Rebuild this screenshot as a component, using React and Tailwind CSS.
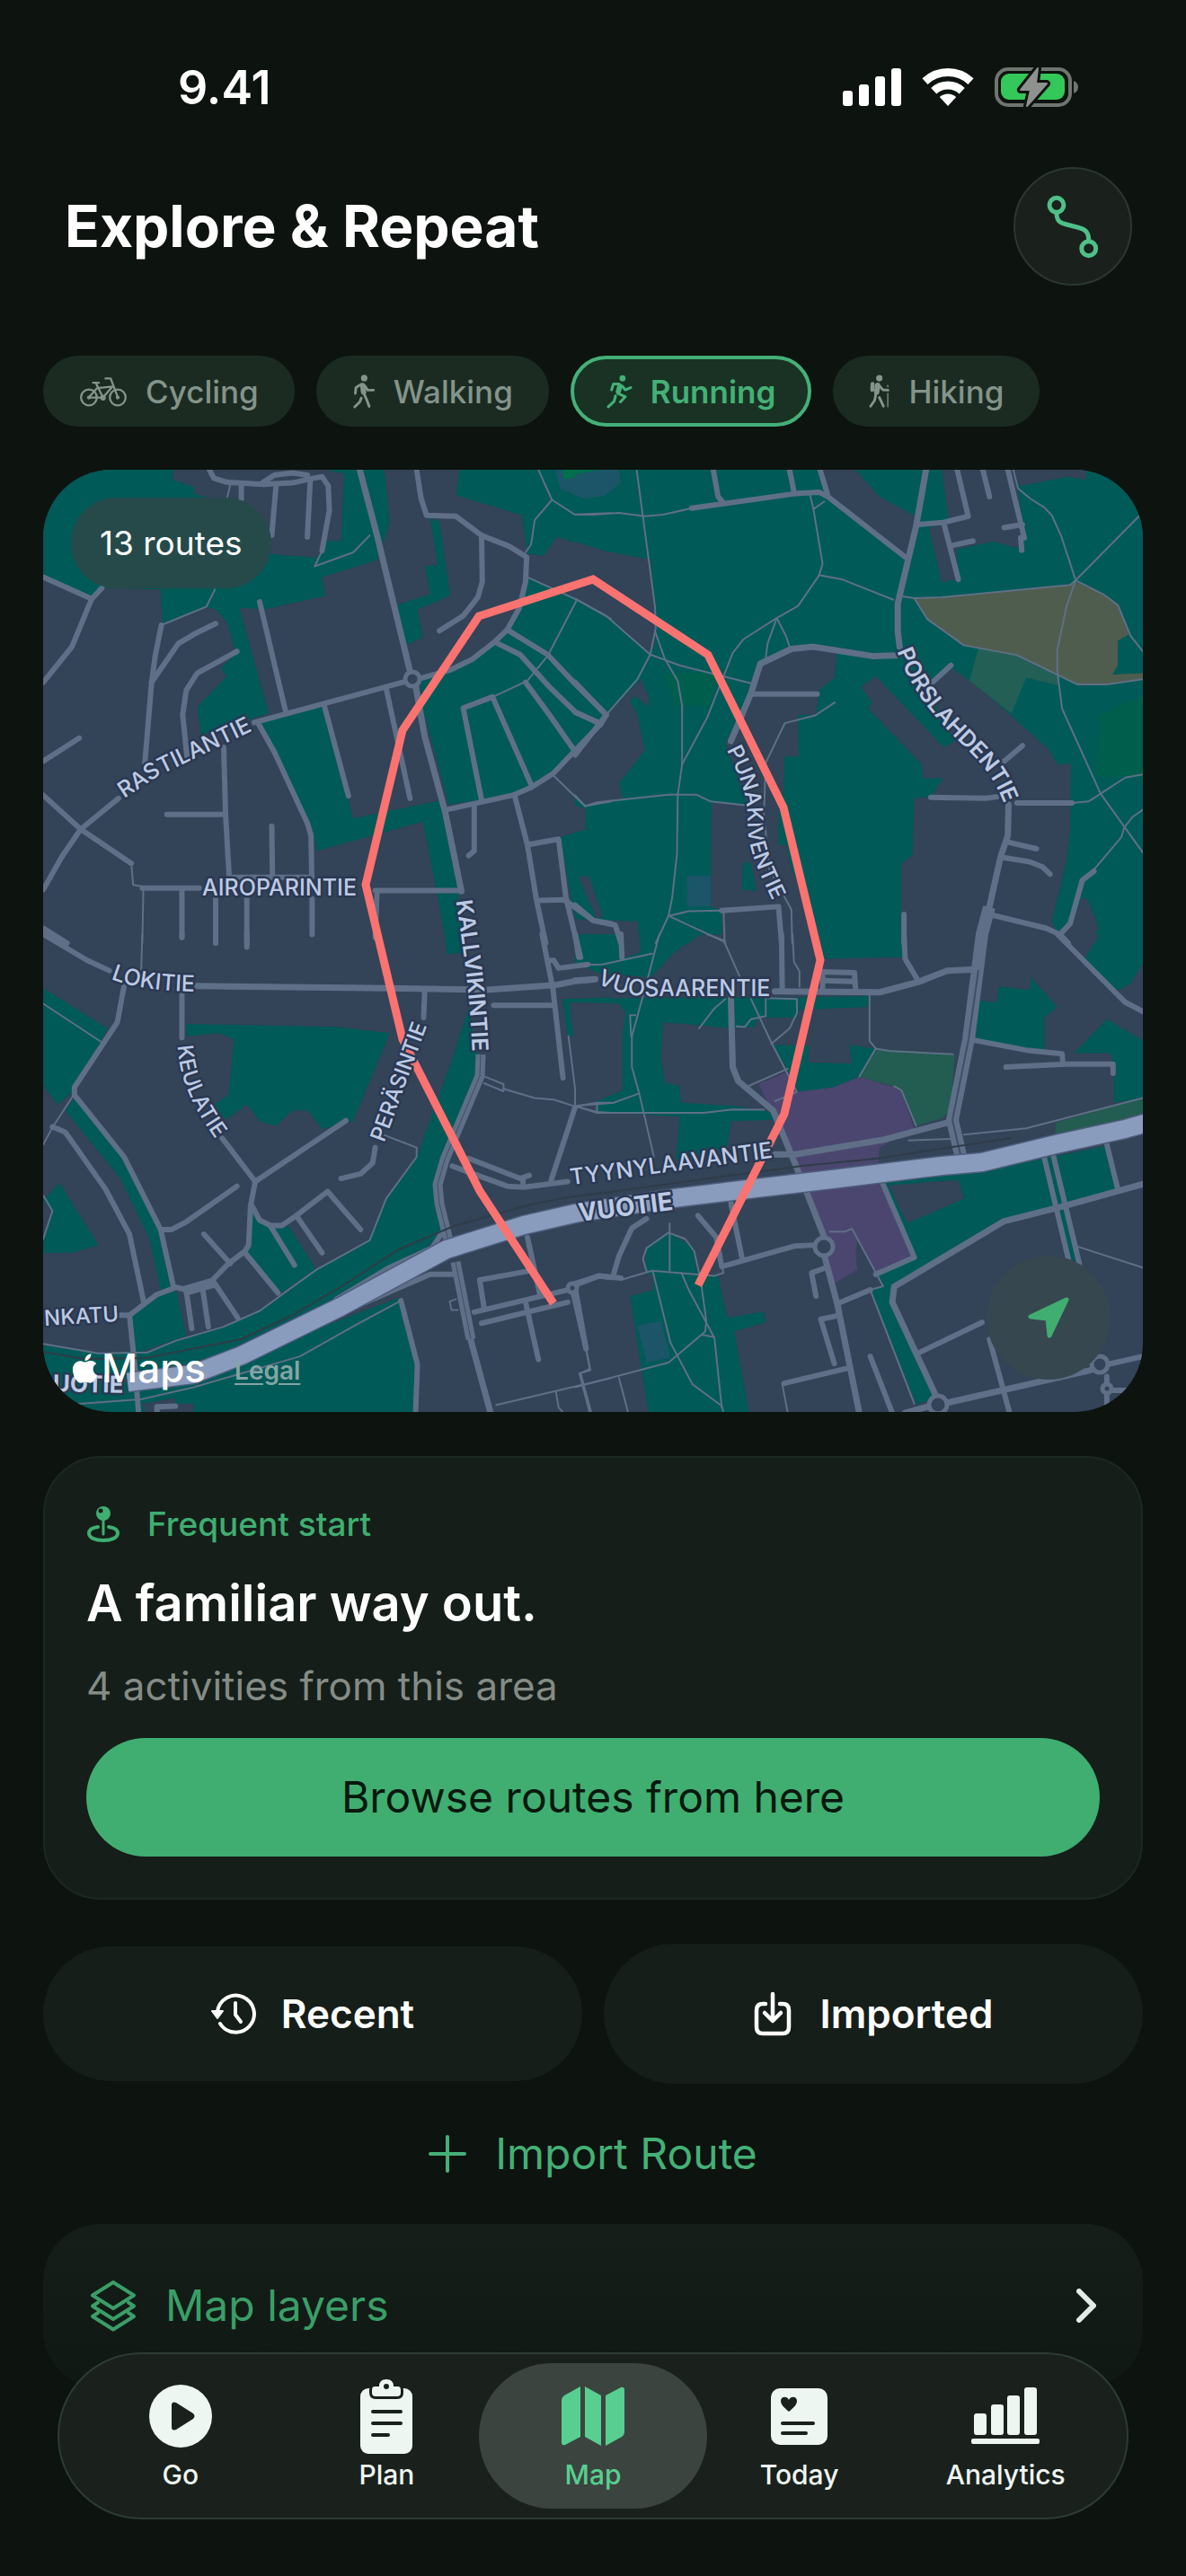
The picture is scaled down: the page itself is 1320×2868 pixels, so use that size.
import React, { useState } from 'react';
import { FaApple } from 'react-icons/fa';

// Map artwork is split in four tiles, each with its own survey grid
const TILES = [
    {
        id: 'nw',
        transform: 'translate(40 510) scale(0.4082 0.3444)',
        land: [
            ['#005a57', '20,38 375,38 372,70 430,92 432,115 500,140 640,310 765,322 795,268 832,268 840,50 790,38 950,38 965,210 930,330 780,385 790,445 630,488 555,485 635,825 450,895 440,805 520,705 505,680 545,630 520,530 490,490 462,482 345,535 340,425 190,420 152,455 20,385'],
            ['#005a57', '1075,195 1100,205 1130,445 1040,490 1055,580 1010,605 985,475 1075,440 1060,350 1095,345'],
            ['#005a57', '1155,38 1570,38 1570,310 1420,255 1385,315 1340,310 1325,185 1145,120'],
            ['#005a57', '1340,385 1480,455 1570,520 1570,820 1540,860 1470,945 1410,1025 1300,1090 1125,1120 1060,830 1045,715 1130,690 1250,595 1285,555 1318,490'],
            ['#005a57', '605,855 785,795 850,1095 865,1165 1110,1105 1150,1390 1165,1545 1115,1545 1090,1390 1055,1175 765,1270 755,1200 655,950'],
            ['#005a57', '1570,1120 1500,1130 1500,1200 1430,1225 1460,1430 1485,1545 1570,1545'],
            ['#334358', '1480,1355 1510,1350 1550,1490 1520,1495'],
            ['#1b5567', '1415,38 1430,100 1505,135 1570,115 1570,38'],
            ['#00704c', '1435,38 1440,68 1570,45 1570,38'],
        ],
        roads: [
            '473,38 485,65 520,78 620,85 700,80 745,68 780,60 797,90 800,170 780,300',
            '620,78 650,55 700,48 740,55',
            '560,85 560,135', '655,85 643,250', '748,70 740,255',
            '1038,38 1050,130 1065,185 1145,188 1215,250 1290,285 1338,320 1335,400 1318,485 1285,555 1250,595 1190,650 1130,685 1050,712',
            '1215,250 1217,400 1205,450 1165,510 1100,558',
            '1285,555 1395,635 1470,730 1555,830',
            '1255,597 1320,635 1400,740 1470,820 1540,860',
            '1335,725 1400,830 1468,945',
            '1215,1105 1165,808 1245,772 1350,1055',
            '1125,1135 1300,1090 1350,1065 1410,1020 1470,945 1540,860 1555,830',
            '1195,1120 1195,1270 1180,1285',
            '1305,1090 1340,1250 1365,1430 1390,1568',
            '1340,1250 1425,1232 1445,1420 1475,1568',
            '1370,1430 1440,1428 1520,1495 1568,1505',
            '595,855 1000,725', '610,465 680,815', '785,795 852,1092', '955,745 1020,1100',
            '605,855 650,950 740,1180 750,1220 752,1350',
            '20,385 152,455 180,420', '152,455 98,610 20,725',
            '490,535 430,570 388,600 315,725',
            '342,540 325,640 315,730 297,985',
            '548,625 440,695 410,750 400,830 412,965',
            '118,905 20,980', '20,1090 122,1200 260,1310', '225,1100 122,1200 70,1290 20,1395',
            '357,1152 515,1152', '512,935 517,1152 527,1355', '643,1190 645,1355', '527,1355 752,1355',
            '290,1390 445,1390', '398,1395 398,1550', '490,1425 490,1568', '575,1425 575,1568',
            '753,1425 753,1540', '925,1398 1155,1398', '930,1400 925,1550', '20,1520 85,1568',
        ],
        mains: ['883,38 930,250 1020,690', '1035,735 1060,900 1115,1140 1160,1400'],
        trails: [
            '530,85 522,125', '910,250 865,305 760,350 780,300', '488,425 465,480 342,540',
            '1370,38 1407,135 1360,200 1350,280 1335,305', '1407,135 1468,182 1568,178',
            '1340,385 1475,458 1568,520', '1475,458 1395,640 1340,720 1250,770',
            '1410,1025 1497,1125 1568,1110', '260,1310 265,1380 293,1385 290,1568',
        ],
    },
    {
        id: 'ne',
        transform: 'translate(640 510) scale(0.4082 0.3444)',
        land: [
            ['#005a57', '0,38 1560,38 1560,1540 0,1540'],
            ['#1b5567', '0,38 120,38 125,80 80,122 30,132 0,122'],
            ['#00704c', '0,38 70,38 0,52'],
            ['#334358', '0,270 80,300 190,325 205,325 218,480 218,600 205,635 100,520 0,455'],
            ['#334358', '180,715 200,770 200,805 165,770 148,785 170,830 190,945 120,1050 130,1100 30,1120 0,1085 0,960 85,830'],
            ['#334358', '0,1125 28,1130 30,1200 0,1210'],
            ['#334358', '665,38 765,38 830,125 930,190 900,320 690,120'],
            ['#334358', '1000,38 1200,38 1225,250 1205,290 1140,270 1040,295 1045,390 1000,402 965,225 1020,210'],
            ['#334358', '1190,38 1395,38 1392,70 1340,60 1215,90'],
            ['#334358', '505,665 590,615 650,612 712,630 708,710 665,750 658,830 608,830 610,965 570,965 570,1060 555,1150 555,1250 575,1250 590,1330 650,1470 665,1545 400,1545 400,1463 370,1450 372,1115 470,1120 410,920 480,765'],
            ['#005a57', '458,1305 480,1310 495,1400 455,1395'],
            ['#334358', '960,740 1030,680 1120,760 1290,940 1315,990 1352,988 1350,1200 1340,1300 1300,1500 1320,1545 890,1545 890,1310 920,1285 925,1100 970,1095 1005,1035 950,1035 945,990 800,810 810,790 780,740 820,705 1005,935 1035,915'],
            ['#334358', '1380,1420 1400,1430 1428,1520 1415,1545 1320,1545 1360,1500'],
            ['#334358', '0,1490 60,1492 170,1498 175,1545 0,1545'],
            ['#334358', '10,1355 38,1350 75,1480 60,1492'],
            ['#235f55', '1100,615 1210,640 1320,705 1320,735 1230,710 1190,825 1075,720'],
            ['#4f5d4e', '925,455 1000,450 1350,410 1365,400 1440,440 1480,475 1510,570 1480,590 1480,670 1465,700 1550,695 1550,715 1450,732 1370,732 1320,705 1210,640 1060,605 960,520'],
            ['#005f4c', '1430,830 1550,770 1550,1030 1420,1030'],
            ['#005f4c', '240,700 390,690 370,800 280,800'],
            ['#1b5567', '305,1350 370,1350 370,1450 305,1450'],
        ],
        roads: [
            '377,38 390,125 405,145', '318,162 600,115 665,110 690,125 900,320', '585,38 598,115', '668,38 688,115',
            '935,215 1005,208 1072,188 1042,38', '1112,38 1130,125', '1180,38 1225,258 1215,258 1218,298',
            '1170,225 1220,215', '1005,208 1045,392', '1030,282 1085,268',
            '480,763 660,763', '1025,670 965,735', '1220,930 1165,985', '970,1097 1120,1100 1150,1095', '1205,1115 1355,1115',
            '1175,1240 1258,1263', '1160,1290 1240,1305 1275,1322 1295,1345',
            '1415,1335 1383,1365 1350,1505 1322,1540', '1130,1475 1285,1520 1322,1540 1345,1568',
            '897,1475 897,1568', '400,1463 555,1450 563,1568', '0,1445 50,1495 110,1510 125,1568',
            '0,725 85,830', '0,822 70,858', '85,830 0,960',
        ],
        mains: [
            '957,38 930,220 880,470 880,560 885,610',
            '875,638 810,640 650,610 590,617 505,665 480,760 425,915',
            '1182,1120 1180,1220 1160,1290 1130,1450 1110,1540',
        ],
        trails: [
            '0,183 50,183 120,177 190,188 240,183 318,162', '168,38 218,480 220,550 205,635 170,715 85,830',
            '0,455 85,510 205,635 285,670 480,728',
            '218,560 245,650 280,720 292,800 292,990 280,1090 278,1280 265,1420 255,1480 220,1568',
            '292,990 360,840 405,705 430,630 460,585 550,517 608,478 665,380 675,342 650,165 640,115', '650,165 680,140',
            '665,378 730,393 868,458', '550,517 525,600 520,645', '550,517 575,575 585,610',
            '708,790 655,832 572,857 520,985 515,1150 530,1330 590,1460 592,1568',
            '0,1090 28,1125 60,1113 255,1088 330,1088 370,1110 470,1123',
            '255,1480 310,1465 400,1463', '255,1480 410,1565', '405,1465 408,1568',
            '1195,38 1208,98 1240,130 1280,160 1300,185 1325,250 1365,395 1540,185',
            '895,447 925,453 1000,450 1350,410 1365,395 1440,440 1480,475 1515,575 1548,625',
            '925,453 960,520 1060,605 1205,637 1370,732 1450,732 1548,715',
            '1365,395 1340,480 1315,620 1315,690 1328,810 1433,1085 1548,1275',
            '1355,1115 1400,1110 1433,1085 1500,1033 1548,1023',
            '1415,1330 1490,1225 1497,1195 1520,1160 1548,1137',
        ],
    },
    {
        id: 'sw',
        transform: 'translate(40 1040) scale(0.4082 0.3444)',
        land: [
            ['#005a57', '1115,0 1160,0 1165,60 1120,65'],
            ['#005a57', '410,290 820,300 965,320 865,605 780,630 740,570 700,570 655,620 610,605 575,550 520,600 480,555 525,520 540,340 500,320 410,330'],
            ['#005a57', '1180,240 1205,380 1205,470 1120,730 1085,800 1090,870 1110,960 1060,1020 830,1180 560,1340 380,1400 300,1440 20,1440 20,1330 170,1355 300,1350 380,1315 510,1270 610,1215 760,1090 905,990 955,855 1040,715 1130,420'],
            ['#005a57', '590,900 620,940 690,945 765,1085 660,1165 570,1035'],
            ['#005a57', '385,1160 410,1300 270,1355 260,1235 370,1145'],
            ['#005a57', '20,175 195,305 105,505 60,550 20,490'],
            ['#005a57', '105,530 240,720 340,955 375,1140 340,1150 310,985 230,790 80,570'],
            ['#005a57', '65,805 170,1005 100,1030 20,1030 20,980 45,900 20,860'],
            ['#005a57', '20,1440 20,1550 1035,1550 1040,1390 990,1175 800,1260 430,1430 270,1450'],
            ['#334358', '290,1518 380,1500 380,1518 430,1518 430,1550 300,1550'],
            ['#005a57', '1435,210 1568,205 1568,220 1455,222 1465,330 1450,330'],
            ['#005a57', '1485,0 1568,0 1568,130 1510,98'],
        ],
        roads: [
            '20,0 140,85 200,118',
            '240,170 222,285 105,495 105,520 240,720 340,955 375,1140 400,1147 480,1120 525,1065 570,1025 580,1005 585,880 598,800',
            '398,195 398,335', '508,660 598,800 845,603', '1060,185 1057,270', '925,690 918,740 885,775 832,790',
            '45,623 80,640 190,825 255,970 295,1195', '215,1232 255,1232 330,1165 375,1145', '255,1232 270,1400 280,1550',
            '548,815 410,930 370,955 345,955', '458,970 530,1065',
            '590,880 610,925 640,942 670,942 710,910 795,832 885,955', '710,910 780,1030', '640,945 705,1070',
            '570,1030 660,1160', '485,1125 550,1240', '410,1155 425,1275', '455,1150 470,1270', '410,1160 485,1135',
            '1135,750 1285,815 1330,818 1450,800', '1180,725 1320,790 1345,780 M1328,790 1328,815', '1248,230 1410,230', '1380,0 1410,180 1437,465',
            '1470,560 1405,795', '1405,85 1412,85 1425,110 1505,98', '1340,980 1375,1170', '1450,1190 1215,1258',
            '1195,1222 1450,1150', '1222,1210 1210,1118 1340,1090', '1335,1190 1370,1375', '1465,1160 1500,1340',
            '1480,1130 1535,1105 1568,1110', '1470,0 1485,75', '995,1185 1040,1390 1035,1550',
            '330,1550 330,1528 380,1526', '820,1180 960,1080 1080,1015 1110,960', '850,1215 1075,1100 1140,1100',
            '398,0 398,10', '490,0 490,28', '575,0 575,42',
        ],
        mains: ['440,168 960,175 1230,180 1415,165 1470,152 1520,147', '1185,1310 1240,1550'],
        trails: [
            '290,0 287,115', '20,225 180,350', '100,525 45,625 20,680', '20,845 45,895 20,985',
            '950,650 1038,690 1038,720 955,855 910,990 765,1085 700,1140 610,1218 510,1270 380,1315 305,1352 170,1355 20,1325',
            '1222,460 1275,485 1275,508 1222,482', '1275,500 1360,530 1412,535 1470,557 1530,575 1568,578', '1470,557 1530,545 1568,545',
            '1452,330 1470,500 1470,557', '995,1185 870,1265 720,1365 430,1465 290,1503 100,1520', '1255,1522 1568,1435',
            '1500,1340 1510,1405 1485,1420 1515,1550', '1145,1180 1128,1188 1133,1215 1150,1215', '1418,1480 1425,1530 1440,1550',
        ],
    },
    {
        id: 'se',
        transform: 'translate(640 1040) scale(0.4082 0.3444)',
        land: [
            ['#005a57', '0,0 345,0 270,60 205,140 60,125 20,100 0,95'],
            ['#334358', '130,0 175,0 178,60 130,78'],
            ['#005a57', '0,210 300,205 600,205 800,200 800,235 610,245 600,285 600,270 500,270 490,300 425,305 300,290 240,285 235,400 245,480 285,490 290,545 440,555 530,575 545,600 425,605 415,690 275,730 285,590 60,575 60,540 130,505 130,320 138,255 120,225 0,220'],
            ['#005a57', '680,80 665,0 890,0 895,75'],
            ['#005a57', '540,358 640,360 635,415 755,418 748,358 820,370 775,460 710,495 610,510 580,440'],
            ['#235c50', '825,370 1035,388 1025,570 1000,595 930,620 885,500 870,492 775,462'],
            ['#4b466f', '500,485 580,445 605,510 705,495 775,462 870,495 890,510 925,630 830,690 825,790 835,790 925,1045 820,1100 770,990 765,1030 770,1085 705,1130 680,960 620,790 545,590'],
            ['#005a57', '1095,215 1150,220 1155,170 1240,180 1243,140 1315,235 1280,270 1280,375 1220,370 1095,340'],
            ['#005a57', '1430,0 1568,0 1550,90 1515,160 1475,185 1390,80'],
            ['#005a57', '1360,385 1450,275 1550,345 1550,530 1470,545 1470,440 1460,385'],
            ['#235c50', '1310,610 1550,528 1550,600 1310,655'],
            ['#005a57', '835,795 1110,765 1280,725 1445,685 1480,825 1330,880 1170,925 870,1145 865,1190 990,1500 930,1520 805,1150 840,1140 820,1100 930,1045'],
            ['#334358', '855,812 1045,795 1060,855 905,935'],
            ['#005a57', '1320,890 1335,890 1370,1065 1350,1045'],
            ['#005a57', '190,1100 195,1010 255,965 320,1010 335,1100'],
            ['#005a57', '210,1090 390,1105 415,1240 515,1220 520,1255 435,1285 475,1550 200,1550 150,1170 215,1150'],
            ['#1b5567', '170,1265 235,1250 260,1370 195,1385'],
        ],
        roads: [
            '897,0 900,80 935,150', '563,0 565,180', '675,185 675,122 762,125 765,180', '675,150 760,153',
            '1075,340 1230,375 1328,387 1330,415', '1175,430 1340,420 1467,420 1467,450', '1315,0 1500,220 1548,250',
            '835,795 925,1045 820,1100', '715,1195 805,1150', '570,1452 745,1403',
            '710,1235 670,1245 707,1388', '680,1080 645,1095 657,1170', '805,1365 865,1548',
            '0,1130 65,1105 125,1112', '105,1100 120,1040 155,950 195,920', '335,910 385,980 400,1075 600,1008 655,1005',
            '425,870 455,1045', '0,1140 30,1340', '935,1355 1110,1255',
            '1280,725 1345,1050', '1305,720 1375,1065', '1450,680 1480,825', '1130,1310 1185,1548',
            '1548,1365 1455,1390', '1450,1430 1450,1548', '1455,1475 1548,1475', '125,0 128,75', '0,0 10,75',
        ],
        mains: [
            '545,185 830,188 935,155 1015,118 1080,115',
            '425,210 430,430 445,475 540,570 620,800 678,975', '545,712 600,712 840,665 1030,605',
            '680,1040 715,1195 775,1548', '1548,808 1330,880 1170,928 870,1140 865,1190 985,1495',
            '1015,1515 1405,1410', '900,1548 970,1525', '0,150 55,146',
        ],
        trails: [
            '230,0 190,180 155,330 155,430 175,515 215,720', '0,555 60,578 350,578 430,567 515,568', '60,550 60,578',
            '0,100 75,98 210,63', '0,555 105,545 175,515', '360,0 405,20 450,140', '593,0 597,90 612,120 612,170',
            '410,210 380,240 338,305', '480,210 535,350 605,510 545,540', '520,207 520,265 480,275 463,300 440,298',
            '520,207 605,210 605,255 585,305 535,355', '165,262 150,262 153,330',
            '803,195 803,345 820,370 860,378 1030,388', '820,370 775,460', '870,492 890,505 930,620',
            '475,490 580,435', '910,667 1025,662', '1060,648 1230,628 1548,530',
            '195,1090 185,1050 195,1015 255,965 300,985 325,1025 340,1105', '258,935 258,1088',
            '125,1118 210,1088 380,1105 405,1095 400,1075', '212,1090 260,1320 320,1455 400,1525 405,1548',
            '290,1095 310,1150 380,1305 400,1530', '345,1140 358,1250 355,1285 255,1385 0,1465', '345,1295 380,1303',
            '30,1340 42,1410 12,1420 40,1548', '120,1435 145,1548', '565,1455 580,1548',
            '695,962 735,962 755,952 840,1138 805,1150 925,1518', '1370,1010 1548,1078',
        ],
    },
];

const ROUNDABOUTS = [
    [459, 756, 8], [917, 1388, 10], [1044, 1564, 10], [1224, 1519, 9], [1232, 1546, 5], [637, 1434, 5],
];

const STREETS = [
    { id: 'rastilantie', name: 'RASTILANTIE', size: 25, d: 'M134 892L176 864L286 811' },
    { id: 'airoparintie', name: 'AIROPARINTIE', size: 25, d: 'M210 997H412' },
    { id: 'lokitie', name: 'LOKITIE', size: 25, d: 'M115 1086Q150 1104 226 1104' },
    { id: 'keulatie', name: 'KEULATIE', size: 24, d: 'M197 1152C198 1200 212 1230 247 1278' },
    { id: 'perasintie', name: 'PERÄSINTIE', size: 24, d: 'M423 1285L452 1205L480 1129' },
    { id: 'kallvikintie', name: 'KALLVIKINTIE', size: 25, weight: 600, d: 'M506 992C516 1060 524 1110 526 1182' },
    { id: 'punakiventie', name: 'PUNAKIVENTIE', size: 24, d: 'M802 822C825 865 832 885 832 915S842 965 866 1016' },
    { id: 'porslahdentie', name: 'PORSLAHDENTIE', size: 25, weight: 600, d: 'M994 712C1010 765 1040 798 1064 822S1108 862 1122 908' },
    { id: 'vuosaarentie', name: 'VUOSAARENTIE', size: 25, d: 'M655 1089Q688 1109 720 1109H868' },
    { id: 'tyynylaavantie', name: 'TYYNYLAAVANTIE', size: 25, d: 'M630 1320L735 1306L866 1288' },
    { id: 'vuotie', name: 'VUOTIE', size: 28, weight: 700, d: 'M638 1361L757 1346' },
    { id: 'nkatu', name: 'NKATU', size: 24, d: 'M48 1476L134 1471' },
    { id: 'uotie', name: 'UOTIE', size: 26, weight: 700, d: 'M52 1549L144 1551' },
];

const HIGHWAY = '142,1539 215,1530 269,1509 379,1455 497,1391 583,1364 644,1350 750,1334 824,1325 926,1313 1048,1298 1093,1294 1175,1274 1252,1257 1280,1249';
const RAILWAY = '48,1505 93,1513 162,1512 269,1491 326,1464 379,1433 444,1391 505,1365 591,1341 632,1333 680,1327 893,1298 975,1290 1126,1267';
const ROUTE = '616,1451 534,1326 448,1157 407,985 448,813 533,686 660,645 788,729 872,899 913,1069 873,1240 777,1431';

const Lines = ({ items, width }) => (
    <g fill="none" stroke="#5f6f87" strokeWidth={width} strokeLinecap="round" strokeLinejoin="round">
        {items.map(points => (
            <path key={points} d={`M${points}`} vectorEffect="non-scaling-stroke" />
        ))}
    </g>
);

const RouteMap = () => (
    <svg viewBox="48 523 1224 1049" preserveAspectRatio="xMidYMid slice" className="block w-full bg-[#334358]" role="img" aria-label="Route map">
        {TILES.map(tile => (
            <g key={tile.id} transform={tile.transform}>
                {tile.land.map(([color, points]) => <polygon key={points} fill={color} points={points} />)}
            </g>
        ))}
        {TILES.map(tile => (
            <g key={tile.id} transform={tile.transform}>
                <Lines items={tile.trails} width={2} />
                <Lines items={tile.roads} width={6} />
                <Lines items={tile.mains} width={7} />
            </g>
        ))}

        {/* Wide two-lane streets */}
        <g fill="none" strokeLinejoin="round">
            <path d="M535 1174L534 1198L495 1291L487 1319L489 1340L499 1381M507 1405L524 1491" stroke="#5f6f87" strokeWidth="11" />
            <path d="M535 1174L534 1198L495 1291L487 1319L489 1340L499 1381M507 1405L524 1491" stroke="#3f4f66" strokeWidth="1" />
            <path d="M1101 1010L1093 1040L1078 1157L1060 1247L1069 1286" stroke="#5f6f87" strokeWidth="14" />
            <path d="M1089 1080L1078 1157L1060 1247L1069 1286" stroke="#3f4f66" strokeWidth="2" />
        </g>

        {ROUNDABOUTS.map(([cx, cy, r]) => (
            <circle key={`${cx}-${cy}`} cx={cx} cy={cy} r={r} fill="#334358" stroke="#5f6f87" strokeWidth="5" />
        ))}

        <polyline points={RAILWAY} fill="none" stroke="#2f3c48" strokeWidth="2" />
        <polyline points={HIGHWAY} fill="none" stroke="#4d5d7b" strokeWidth="23" strokeLinejoin="round" />
        <polyline points={HIGHWAY} fill="none" stroke="#8a9cbe" strokeWidth="20" strokeLinejoin="round" />
        <polyline points={ROUTE} fill="none" stroke="#fa7371" strokeWidth="9" />

        {STREETS.map(street => (
            <g key={street.id}>
                <path id={street.id} d={street.d} fill="none" />
                <text
                    fontSize={street.size}
                    fontWeight={street.weight || 500}
                    fill="#bccae4"
                    stroke="#2b3852"
                    strokeWidth="5"
                    strokeLinejoin="round"
                    paintOrder="stroke"
                    textAnchor="middle"
                >
                    <textPath href={`#${street.id}`} startOffset="50%">{street.name}</textPath>
                </text>
            </g>
        ))}
    </svg>
);

const stroke = { fill: 'none', stroke: 'currentColor', strokeLinecap: 'round', strokeLinejoin: 'round' };

const BikeIcon = () => (
    <svg viewBox="0 0 162 104" className="h-[34px] w-[54px]" {...stroke} strokeWidth="7">
        <circle cx="32" cy="72" r="27" />
        <circle cx="130" cy="72" r="27" />
        <path d="M32 71L60 40L112 35L80 72H32M130 71L106 7H88M46 22H66M56 24L80 72" />
        <circle cx="80" cy="73" r="6" />
        <circle cx="32" cy="72" r="3" />
        <circle cx="130" cy="72" r="3" />
    </svg>
);

const WalkIcon = () => (
    <svg viewBox="0 0 78 116" className="h-[38px] w-[26px]" {...stroke} strokeWidth="9">
        <circle cx="40" cy="12" r="11" fill="currentColor" stroke="none" />
        <path d="M35 37L38 60" strokeWidth="18" />
        <path d="M10 64L12 44L28 34M42 38L52 53H72M40 66L48 84L57 108M30 80L25 93L8 110" />
    </svg>
);

const RunIcon = () => (
    <svg viewBox="0 0 86 112" className="h-[38px] w-[29px]" {...stroke} strokeWidth="9">
        <circle cx="53" cy="12" r="10" fill="currentColor" stroke="none" />
        <path d="M44 38L39 56" strokeWidth="17" />
        <path d="M17 50L23 31L42 31M52 38L62 50L80 43M38 62L62 73L46 90M30 70L25 88L6 106" />
    </svg>
);

const HikeIcon = () => (
    <svg viewBox="0 0 74 116" className="h-[38px] w-[24px]" {...stroke} strokeWidth="9">
        <circle cx="36" cy="12" r="11" fill="currentColor" stroke="none" />
        <path d="M13 32L12 52" strokeWidth="14" />
        <path d="M30 36L27 60" strokeWidth="18" />
        <path d="M36 38L48 52L66 53M24 66L20 88L6 108M36 78L50 108" />
        <path d="M65 36V42M65 64V110" strokeWidth="4" />
    </svg>
);

const RouteIcon = () => (
    <svg viewBox="0 0 175 214" className="h-[71px] w-[58px]" {...stroke} strokeWidth="15">
        <circle cx="33" cy="34" r="24" />
        <circle cx="141" cy="180" r="24" />
        <path d="M33 60C33 88 46 94 62 98L108 110C132 116 141 128 141 154" />
    </svg>
);

const StartPinIcon = () => (
    <svg viewBox="0 0 38 42" className="h-[42px] w-[38px]" {...stroke} strokeWidth="4">
        <circle cx="19" cy="9" r="8" fill="currentColor" stroke="none" />
        <circle cx="16" cy="6" r="2.5" fill="#151e19" stroke="none" />
        <path d="M19 16V32" strokeWidth="3" />
        <path d="M13 24C6 25 3 28 3 31C3 36 10 39 19 39S35 36 35 31C35 28 32 25 25 24" />
    </svg>
);

const RecentIcon = () => (
    <svg viewBox="0 0 50 48" className="h-12 w-[50px]" {...stroke} strokeWidth="4">
        <path d="M7 22A20.5 20.5 0 1 1 10 35" />
        <path d="M1 21H13L7 29Z" fill="currentColor" strokeWidth="2" />
        <path d="M27 12V25L33 33" />
    </svg>
);

const ImportIcon = () => (
    <svg viewBox="0 0 42 50" className="h-[50px] w-[42px]" {...stroke} strokeWidth="4.5">
        <path d="M13 14H10Q3 14 3 21V40Q3 47 10 47H32Q39 47 39 40V21Q39 14 32 14H29M21 3V32M12 24L21 33L30 24" />
    </svg>
);

const PlusIcon = () => (
    <svg viewBox="0 0 42 42" className="size-[42px]" {...stroke} strokeWidth="4">
        <path d="M21 2V40M2 21H40" />
    </svg>
);

const LayersIcon = () => (
    <svg viewBox="0 0 52 58" className="h-[58px] w-[52px]" {...stroke} strokeWidth="4">
        <path d="M26 3L49 17.5L26 32L3 17.5Z" />
        <path d="M9 25.5L3 29.5L26 44L49 29.5L43 25.5M9 37L3 41L26 55.5L49 41L43 37" />
    </svg>
);

const ChevronIcon = () => (
    <svg viewBox="0 0 22 38" className="h-[38px] w-[22px] text-[#e3ebe6]" {...stroke} strokeWidth="6">
        <path d="M3 3L19 19L3 35" />
    </svg>
);

const GoIcon = () => (
    <svg viewBox="0 0 70 70" className="size-[70px]" fill="currentColor">
        <path fillRule="evenodd" d="M35 0A35 35 0 1 1 35 70A35 35 0 1 1 35 0ZM25 23V47Q25 52 30 50L49 38Q52 35 49 32L30 20Q25 18 25 23Z" />
    </svg>
);

const PlanIcon = () => (
    <svg viewBox="0 0 58 83" className="h-[83px] w-[58px]" fill="currentColor">
        <rect y="10" width="58" height="73" rx="9" />
        <path d="M16 8H21Q21 0 29 0T37 8H42Q45 8 45 12V15Q45 19 41 19H17Q13 19 13 15V12Q13 8 16 8Z" stroke="#1a211d" strokeWidth="6" paintOrder="stroke" />
        <circle cx="29" cy="8" r="3" fill="#1a211d" />
        <path d="M14 36H45M14 49H45M14 62H31" stroke="#1a211d" strokeWidth="4" strokeLinecap="round" />
    </svg>
);

const MapIcon = () => (
    <svg viewBox="0 0 70 66" className="h-[66px] w-[70px]" fill="currentColor">
        <path d="M0 15Q0 12 3 10L21 0V56L4 65Q0 66 0 62ZM26 0L44 10V66L26 56ZM49 10L66 1Q70 0 70 4V51Q70 54 67 56L49 66Z" />
    </svg>
);

const TodayIcon = () => (
    <svg viewBox="0 0 63 63" className="size-[63px]" fill="currentColor">
        <rect width="63" height="63" rx="10" />
        <path d="M20 26C14 21 11 18 11 14C11 9 18 8 20 13C22 8 29 9 29 14C29 18 26 21 20 26Z" fill="#1a211d" />
        <path d="M13 39H47M13 50H39" stroke="#1a211d" strokeWidth="4" strokeLinecap="round" />
    </svg>
);

const AnalyticsIcon = () => (
    <svg viewBox="0 0 76 64" className="h-16 w-[76px]" fill="currentColor">
        <rect x="3" y="29" width="14" height="24" rx="3" />
        <rect x="22" y="19" width="14" height="34" rx="3" />
        <rect x="40" y="9" width="14" height="44" rx="3" />
        <rect x="59" width="14" height="53" rx="3" />
        <rect y="57" width="76" height="6" rx="2" />
    </svg>
);

const StatusBar = () => (
    <div className="flex h-[186px] items-start justify-between pt-[74px] pr-[119px] pl-[198px] text-white">
        <span className="text-[52px] leading-[48px] font-semibold">9.41</span>
        <div className="flex items-center gap-[23px]">
            <svg viewBox="0 0 65 42" className="h-[42px] w-[65px]" fill="currentColor" aria-hidden="true">
                <rect y="25" width="11" height="17" rx="3" />
                <rect x="18" y="18" width="11" height="24" rx="3" />
                <rect x="36" y="9" width="11" height="33" rx="3" />
                <rect x="54" width="11" height="42" rx="3" />
            </svg>
            <svg viewBox="0 0 58 42" className="h-[42px] w-[58px]" aria-hidden="true">
                <g fill="none" stroke="currentColor" strokeWidth="9">
                    <path d="M3.5 14.6A37.5 37.5 0 0 1 54.5 14.6" />
                    <path d="M13.3 25.2A23 23 0 0 1 44.7 25.2" />
                </g>
                <path d="M29 42L19.8 32.1A13.5 13.5 0 0 1 38.2 32.1Z" fill="currentColor" />
            </svg>
            <svg viewBox="0 -1 94 46" className="h-[46px] w-[94px]" aria-hidden="true">
                <rect x="2" y="2" width="82" height="40" rx="13" fill="none" stroke="#70756f" strokeWidth="4" />
                <rect x="7" y="7" width="71" height="29" rx="9" fill="#34c759" />
                <path d="M88 15Q93 17 93 22T88 29Z" fill="#70756f" />
                <path d="M48 1L29 25H40L36 43L58 18H46Z" fill="#8e918e" stroke="#0d130f" strokeWidth="8" strokeLinejoin="round" paintOrder="stroke" />
                <path d="M48 1L29 25H40L36 43L58 18H46Z" fill="#8e918e" stroke="#8e918e" strokeWidth="2" strokeLinejoin="round" />
            </svg>
        </div>
    </div>
);

const ACTIVITIES = [
    { id: 'cycling', label: 'Cycling', Icon: BikeIcon },
    { id: 'walking', label: 'Walking', Icon: WalkIcon },
    { id: 'running', label: 'Running', Icon: RunIcon },
    { id: 'hiking', label: 'Hiking', Icon: HikeIcon },
];

const TABS = [
    { id: 'go', label: 'Go', Icon: GoIcon },
    { id: 'plan', label: 'Plan', Icon: PlanIcon },
    { id: 'map', label: 'Map', Icon: MapIcon },
    { id: 'today', label: 'Today', Icon: TodayIcon },
    { id: 'analytics', label: 'Analytics', Icon: AnalyticsIcon },
];

const TabBar = () => {
    const [tab, setTab] = useState('map');

    return (
        <nav className="fixed inset-x-16 bottom-[63px] flex h-[186px] rounded-full border-2 border-[#2c3c34] bg-[#1a211d] px-5 py-[10px]">
            {TABS.map(({ id, label, Icon }) => (
                <button
                    key={id}
                    onClick={() => setTab(id)}
                    className={`relative flex flex-1 flex-col items-center ${tab === id ? 'text-[#58cf90]' : 'text-[#eef6f1]'}`}
                >
                    {tab === id && <span className="absolute -inset-x-3 inset-y-0 rounded-full bg-[#3b443f]" />}
                    <span className="relative flex h-[106px] items-center pt-3">
                        <Icon />
                    </span>
                    <span className="relative text-[30px] leading-9 font-medium">{label}</span>
                </button>
            ))}
        </nav>
    );
};

export default function App() {
    const [activity, setActivity] = useState('running');

    return (
        <div className="min-h-screen bg-[#0d130f] pb-[200px] font-['Inter',sans-serif] text-white">
            <StatusBar />

            <header className="flex items-center justify-between pr-[60px] pl-[72px]">
                <h1 className="text-[64px] leading-[76px] font-bold">Explore &amp; Repeat</h1>
                <button aria-label="Routes" className="flex size-[132px] items-center justify-center rounded-full border-2 border-[#2b3731] bg-[#1a211d] text-[#4fc088]">
                    <RouteIcon />
                </button>
            </header>

            <main className="px-12">
                <div className="mt-[78px] flex gap-6">
                    {ACTIVITIES.map(({ id, label, Icon }) => (
                        <button
                            key={id}
                            aria-pressed={activity === id}
                            onClick={() => setActivity(id)}
                            className={`flex h-[79px] items-center gap-5 rounded-full border-4 px-9 text-[35px] leading-[44px] ${activity === id
                                ? 'border-[#44b077] bg-[#193223] font-semibold text-[#44b077]'
                                : 'border-[#1b2b22] bg-[#1b2b22] font-medium text-[#84948a]'
                                }`}
                        >
                            <Icon />
                            {label}
                        </button>
                    ))}
                </div>

                <section className="relative mt-12 overflow-hidden rounded-[76px]">
                    <RouteMap />
                    <span className="absolute top-[31px] left-[31px] flex h-[101px] items-center rounded-full bg-[#264a4a] px-8 text-[37px]">13 routes</span>
                    <div className="absolute bottom-6 left-7 flex items-end gap-8">
                        <span className="flex items-center text-[44px] leading-[50px] font-medium">
                            <FaApple size={37} />
                            Maps
                        </span>
                        <a href="#legal" className="pb-1 text-[28px] leading-9 font-semibold text-[#84a5a5] underline underline-offset-4">Legal</a>
                    </div>
                    <button aria-label="Show my location" className="absolute right-9 bottom-9 flex size-[138px] items-center justify-center rounded-full bg-[#374750] text-[#3fae70]">
                        <svg viewBox="0 0 48 48" className="size-12" fill="currentColor" stroke="currentColor" strokeWidth="5" strokeLinejoin="round">
                            <path d="M44 4L4 23L23 25L25 44Z" />
                        </svg>
                    </button>
                </section>

                <section className="mt-[49px] rounded-[64px] border-2 border-[#1b2922] bg-[#151e19] px-[46px] pt-[52px] pb-[46px]">
                    <div className="flex items-center gap-[30px] text-[37px] leading-[44px] font-medium text-[#3fae70]">
                        <StartPinIcon />
                        Frequent start
                    </div>
                    <h2 className="mt-7 text-[56px] leading-[76px] font-semibold">A familiar way out.</h2>
                    <p className="mt-6 text-[44px] leading-[60px] text-[#848c86]">4 activities from this area</p>
                    <button className="mt-7 flex h-[132px] w-full items-center justify-center rounded-full bg-[#40ae70] text-[48px] text-[#08180e]">
                        Browse routes from here
                    </button>
                </section>

                <div className="mt-[49px] flex items-center gap-6 text-[44px] font-semibold">
                    <button className="flex h-[150px] flex-1 items-center justify-center gap-7 rounded-full bg-[#151e19]">
                        <RecentIcon />
                        Recent
                    </button>
                    <button className="flex h-[156px] flex-1 items-center justify-center gap-8 rounded-full bg-[#151e19]">
                        <ImportIcon />
                        Imported
                    </button>
                </div>

                <button className="mx-auto mt-12 flex items-center gap-8 text-[48px] leading-[60px] text-[#44b077]">
                    <PlusIcon />
                    Import Route
                </button>

                <button className="mt-12 flex h-[182px] w-full items-center gap-8 rounded-[64px] bg-linear-to-b from-[#151e19] to-[#101813] px-[52px] text-[48px] text-[#3a9e67]">
                    <LayersIcon />
                    Map layers
                    <span className="ml-auto">
                        <ChevronIcon />
                    </span>
                </button>
            </main>

            <TabBar />
        </div>
    );
}
